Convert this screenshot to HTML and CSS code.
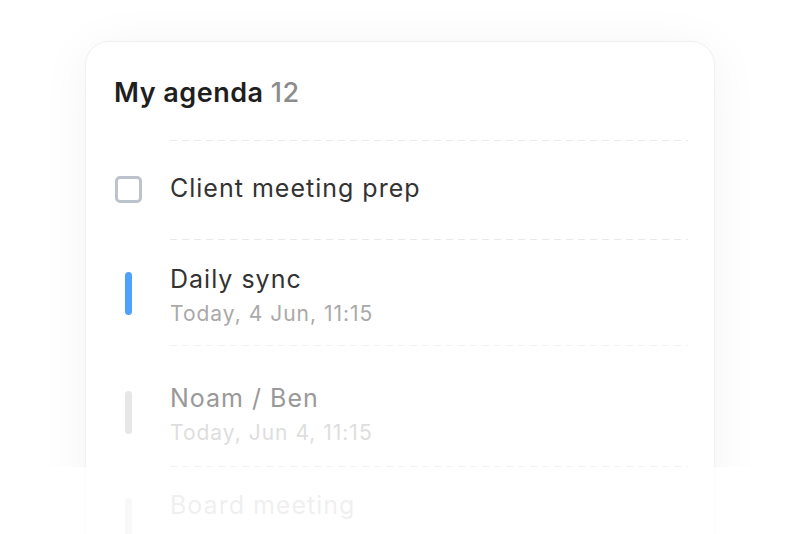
FILE: index.html
```html
<!DOCTYPE html>
<html lang="en">
<head>
    <meta charset="UTF-8">
    <meta name="viewport" content="width=device-width, initial-scale=1.0">
    <title>My agenda</title>
    <link rel="stylesheet" href="styles.css">
</head>
<body>
    <div class="card">
        <h2 class="title">My agenda <span class="count">12</span></h2>

        <div class="list">
            <div class="sep"></div>
            <div class="row task">
                <div class="icon"><span class="checkbox"></span></div>
                <div class="name">Client meeting prep</div>
            </div>

            <div class="sep"></div>
            <div class="row event">
                <div class="icon"><span class="bar blue"></span></div>
                <div>
                    <div class="name">Daily sync</div>
                    <div class="date">Today, 4 Jun, 11:15</div>
                </div>
            </div>

            <div class="sep light"></div>
            <div class="row event later">
                <div class="icon"><span class="bar gray"></span></div>
                <div>
                    <div class="name">Noam / Ben</div>
                    <div class="date">Today, Jun 4, 11:15</div>
                </div>
            </div>

            <div class="sep light"></div>
            <div class="row event last">
                <div class="icon"><span class="bar gray"></span></div>
                <div>
                    <div class="name">Board meeting</div>
                </div>
            </div>
        </div>
    </div>

    <!-- white veil over the bottom of the list -->
    <div class="fade"></div>
</body>
</html>
```

FILE: styles.css
```css
html, body {
    margin: 0;
    height: 100%;
    overflow: hidden;
    background: #fff;
}
body {
    position: relative;
    font-family: Inter, "Noto Sans", sans-serif;
    color: #2b2b2b;
}
.card {
    width: 630px;
    height: 600px;
    margin: 41px auto 0;
    box-sizing: border-box;
    padding: 35px 26px 0 28px;
    background: #fff;
    border: 1px solid #f0f0f0;
    border-radius: 24px 24px 0 0;
    box-shadow: 0 6px 50px rgba(0, 0, 0, 0.05);
}
.title {
    margin: 0 0 31px;
    font-size: 27px;
    line-height: 32px;
    font-weight: 600;
    color: #1f1f1f;
    letter-spacing: 0.5px;
}
.count {
    color: #8c8c8c;
    font-weight: 500;
}
.sep {
    height: 1px;
    margin-left: 56px;
    background: repeating-linear-gradient(to right, #e9e9e9 0 7px, transparent 7px 12px);
}
.sep.light {
    background: repeating-linear-gradient(to right, #f3f3f3 0 7px, transparent 7px 12px);
}
.row {
    display: grid;
    grid-template-columns: 56px 1fr;
}
.row.task {
    align-items: center;
    padding: 32px 0 36px;
}
.row.event {
    padding: 24px 0 18px;
}
.row.later {
    padding: 37px 0 20px;
}
.row.last {
    padding-top: 23px;
}
.icon {
    display: flex;
    justify-content: center;
    width: 28px;
}
.checkbox {
    width: 27px;
    height: 27px;
    margin-top: 2px;
    box-sizing: border-box;
    border: 3px solid #bcc3cd;
    border-radius: 5px;
}
.bar {
    width: 7px;
    height: 43px;
    margin-top: 8px;
    border-radius: 4px;
}
.bar.blue {
    background: #4fa2fb;
}
.bar.gray {
    background: #e7e7e7;
}
.later .bar {
    margin-top: 8px;
}
.name {
    font-size: 25px;
    line-height: 30px;
    letter-spacing: 1px;
    color: #333;
}
.date {
    margin-top: 7px;
    font-size: 21px;
    line-height: 26px;
    letter-spacing: 1px;
    color: #a9a9a9;
}
.later .name {
    color: #999;
}
.later .date {
    color: #dedede;
}
.last .name {
    color: #8f8f8f;
}
.last .bar {
    background: #c9c9c9;
}
.fade {
    position: absolute;
    left: 0;
    right: 0;
    top: 467px;
    bottom: 0;
    background: rgba(255, 255, 255, 0.86);
}
```
